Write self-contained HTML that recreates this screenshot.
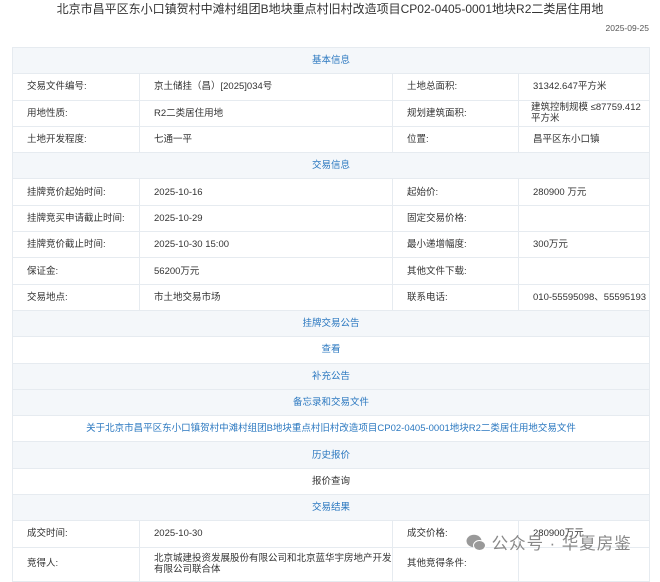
<!DOCTYPE html>
<html><head><meta charset="utf-8"><style>
body{margin:0;width:660px;height:568px;overflow:hidden;background:#fff;font-family:"Liberation Sans","Noto Sans CJK SC",sans-serif;color:#333;position:relative}
.t{position:absolute;top:1px;left:0;width:660px;text-align:center;font-size:12px;line-height:16px;color:#333}
.d{position:absolute;right:11px;top:23px;font-size:8.5px;color:#555}
table{position:absolute;left:12px;top:47px;border-collapse:collapse;width:637px;font-size:9.5px;table-layout:fixed}
tr{height:26.3px}
td{border:1px solid #e6ebf0;padding:0 0 0 14px;line-height:11px;background:#fff}
tr.h td{background:#f4f7fa;text-align:center;color:#2b78c0;padding:0}
tr.c td{text-align:center;padding:0}
.b{color:#2b78c0}
.wm{position:absolute;left:466px;top:530px;font-size:16.5px;color:#888;letter-spacing:1px}
</style></head><body>
<div class="t">北京市昌平区东小口镇贺村中滩村组团B地块重点村旧村改造项目CP02-0405-0001地块R2二类居住用地</div>
<div class="d">2025-09-25</div>
<table>
<colgroup><col style="width:127px"><col style="width:253px"><col style="width:126px"><col style="width:131px"></colgroup>
<tr class="h"><td colspan="4">基本信息</td></tr>
<tr><td>交易文件编号:</td><td>京土储挂（昌）[2025]034号</td><td>土地总面积:</td><td>31342.647平方米</td></tr>
<tr><td>用地性质:</td><td>R2二类居住用地</td><td>规划建筑面积:</td><td style="padding-left:12px">建筑控制规模 ≤87759.412平方米</td></tr>
<tr><td>土地开发程度:</td><td>七通一平</td><td>位置:</td><td>昌平区东小口镇</td></tr>
<tr class="h"><td colspan="4">交易信息</td></tr>
<tr><td>挂牌竞价起始时间:</td><td>2025-10-16</td><td>起始价:</td><td>280900 万元</td></tr>
<tr><td>挂牌竞买申请截止时间:</td><td>2025-10-29</td><td>固定交易价格:</td><td></td></tr>
<tr><td>挂牌竞价截止时间:</td><td>2025-10-30 15:00</td><td>最小递增幅度:</td><td>300万元</td></tr>
<tr><td>保证金:</td><td>56200万元</td><td>其他文件下载:</td><td></td></tr>
<tr><td>交易地点:</td><td>市土地交易市场</td><td>联系电话:</td><td style="white-space:nowrap">010-55595098、55595193</td></tr>
<tr class="h"><td colspan="4">挂牌交易公告</td></tr>
<tr class="c"><td colspan="4" class="b">查看</td></tr>
<tr class="h"><td colspan="4">补充公告</td></tr>
<tr class="h"><td colspan="4">备忘录和交易文件</td></tr>
<tr class="c"><td colspan="4" class="b">关于北京市昌平区东小口镇贺村中滩村组团B地块重点村旧村改造项目CP02-0405-0001地块R2二类居住用地交易文件</td></tr>
<tr class="h"><td colspan="4">历史报价</td></tr>
<tr class="c"><td colspan="4">报价查询</td></tr>
<tr class="h"><td colspan="4">交易结果</td></tr>
<tr><td>成交时间:</td><td>2025-10-30</td><td>成交价格:</td><td>280900万元</td></tr>
<tr style="height:34px"><td style="vertical-align:top;padding-top:10px">竞得人:</td><td style="vertical-align:top;padding-top:5px">北京城建投资发展股份有限公司和北京蓝华宇房地产开发有限公司联合体</td><td style="vertical-align:top;padding-top:10px">其他竞得条件:</td><td></td></tr>
</table>
<div class="wm"><svg width="20" height="18" viewBox="0 0 20 18" style="vertical-align:-3px"><ellipse cx="8" cy="7" rx="7.5" ry="6.2" fill="#999"/><ellipse cx="13.5" cy="11.5" rx="6" ry="5" fill="#999" stroke="#fff" stroke-width="1"/></svg> 公众号 · 华夏房鉴</div>
</body></html>
